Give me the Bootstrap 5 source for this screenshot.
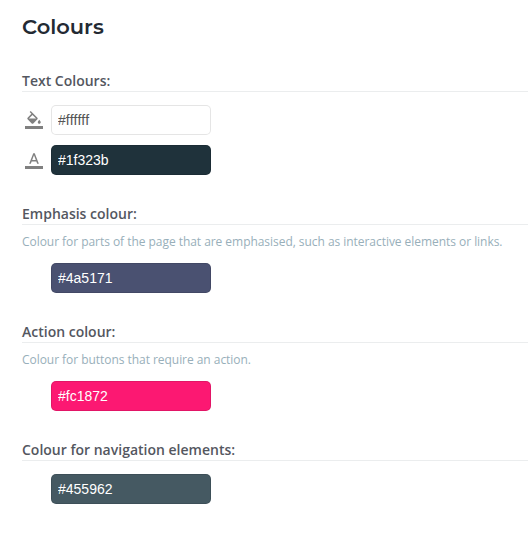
<!DOCTYPE html>
<html lang="en">
<head>
<meta charset="utf-8">
<meta name="viewport" content="width=device-width, initial-scale=1">
<title>Colours</title>
<link href="https://cdn.jsdelivr.net/npm/bootstrap@5.3.0/dist/css/bootstrap.min.css" rel="stylesheet">
<style>
body{font-family:"Open Sans",sans-serif;background:#fff;color:#54575f}
.panel{padding:11px 1px 0 22px}
.page-title{font:600 21px/32px Montserrat,Inter,sans-serif;color:#232a33;margin-bottom:28px}
.setting{margin-bottom:29px}
.setting-title{font-size:14px;font-weight:600;line-height:20px;border-bottom:1px solid #ebedee;margin:0 0 13px}
.setting-title.has-hint{margin-bottom:8px}
.hint{font-size:12px;line-height:18px;letter-spacing:-.045px;color:#98afba;margin-bottom:12px;white-space:nowrap}
.swatch-row{padding-left:3px;gap:8px}
.swatch-row + .swatch-row{margin-top:10px}
.glyph{width:18px;height:18px;flex:none;fill:#808080}
.swatch.form-control{width:160px;height:30px;padding:0 6px;border:1px solid rgba(0,0,0,.1);border-radius:5px;font:14px/28px "Liberation Sans",Arial,sans-serif;font-kerning:none;color:#fff}
.swatch.c-bg{background:#fff;color:#555}
.swatch.c-text{background:#1f323b}
.swatch.c-emphasis{background:#4a5171}
.swatch.c-action{background:#fc1872}
.swatch.c-nav{background:#455962}
</style>
<script src="https://cdn.jsdelivr.net/npm/bootstrap@5.3.0/dist/js/bootstrap.bundle.min.js"></script>
</head>
<body>
<main class="panel">
  <h1 class="page-title">Colours</h1>
  <section class="setting">
    <h2 class="setting-title">Text Colours:</h2>
    <div class="swatch-row d-flex align-items-center">
      <svg class="glyph" viewBox="0 0 24 24" aria-hidden="true"><path d="M16.56 8.94L7.62 0 6.21 1.41l2.38 2.38-5.15 5.15c-.59.59-.59 1.54 0 2.12l5.5 5.5c.29.29.68.44 1.06.44s.77-.15 1.06-.44l5.5-5.5c.59-.58.59-1.53 0-2.12zM5.21 10L10 5.21 14.79 10H5.21zM19 11.500s-2 2.170-2 3.500c0 1.100.9 2 2 2s2-.9 2-2c0-1.330-2-3.500-2-3.500zM0 20h24v4H0z"/></svg>
      <input class="form-control swatch c-bg" type="text" value="#ffffff" aria-label="Background colour">
    </div>
    <div class="swatch-row d-flex align-items-center">
      <svg class="glyph" viewBox="0 0 24 24" aria-hidden="true"><path d="M0 20h24v4H0zM11 3L5.500 17h2.250l1.120-3h6.250l1.120 3h2.250L13 3h-2zm-1.380 9L12 5.670 14.380 12H9.620z"/></svg>
      <input class="form-control swatch c-text" type="text" value="#1f323b" aria-label="Text colour">
    </div>
  </section>
  <section class="setting">
    <h2 class="setting-title has-hint">Emphasis colour:</h2>
    <p class="hint">Colour for parts of the page that are emphasised, such as interactive elements or links.</p>
    <div class="swatch-row d-flex"><span class="glyph"></span><input class="form-control swatch c-emphasis" type="text" value="#4a5171" aria-label="Emphasis colour"></div>
  </section>
  <section class="setting">
    <h2 class="setting-title has-hint">Action colour:</h2>
    <p class="hint">Colour for buttons that require an action.</p>
    <div class="swatch-row d-flex"><span class="glyph"></span><input class="form-control swatch c-action" type="text" value="#fc1872" aria-label="Action colour"></div>
  </section>
  <section class="setting mb-0">
    <h2 class="setting-title">Colour for navigation elements:</h2>
    <div class="swatch-row d-flex"><span class="glyph"></span><input class="form-control swatch c-nav" type="text" value="#455962" aria-label="Navigation colour"></div>
  </section>
</main>
</body>
</html>
